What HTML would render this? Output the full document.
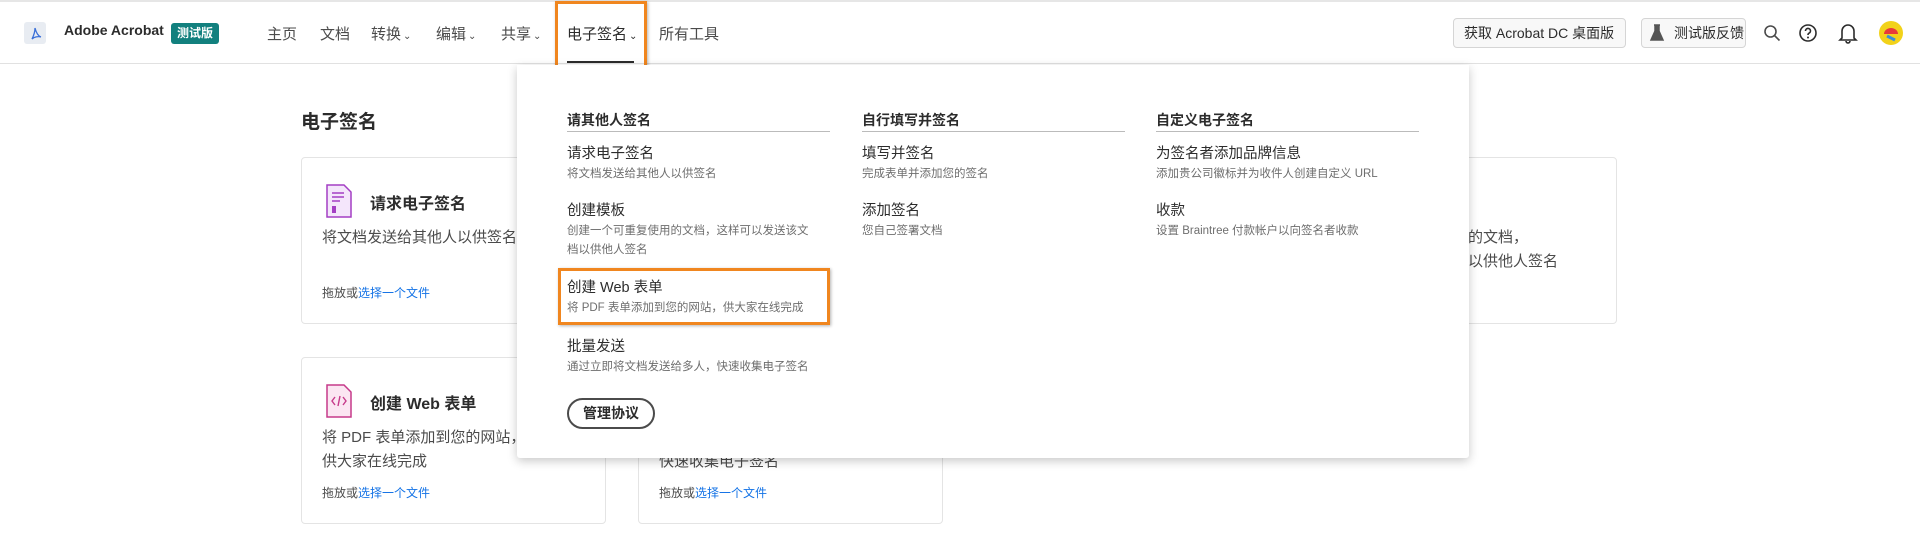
<!DOCTYPE html>
<html><head><meta charset="utf-8"><style>
*{margin:0;padding:0;box-sizing:border-box}
body{width:1920px;height:547px;background:#fff;font-family:"Liberation Sans","Noto Sans CJK SC",sans-serif;color:#2c2c2c;position:relative;overflow:hidden}
.a{position:absolute;white-space:nowrap}
.hdr{position:absolute;left:0;top:0;width:1920px;height:64px;border-top:2px solid #e6e6e6;border-bottom:1px solid #e1e1e1}
.nav{font-size:15px;color:#4b4b4b;top:23px}
.nav small{font-size:10px;margin-left:2px}
.btn{position:absolute;top:18px;height:30px;border:1px solid #d5d5d5;border-radius:4px;background:#f8f8f8;font-size:14px;color:#2c2c2c;line-height:28px;padding:0 10px;white-space:nowrap;overflow:hidden}
.card{position:absolute;width:305px;height:167px;border:1px solid #e4e4e4;border-radius:4px;background:#fff}
.ct{position:absolute;left:68px;top:32px;font-size:16px;font-weight:bold;color:#2c2c2c}
.cd{position:absolute;left:20px;top:68px;font-size:15px;color:#4b4b4b;line-height:24px}
.cl{position:absolute;left:20px;top:126px;font-size:12px;color:#4b4b4b}
.cl span{color:#1473e6}
.dd{position:absolute;left:517px;top:65px;width:952px;height:393px;background:#fff;box-shadow:0 3px 10px rgba(0,0,0,.22);border-radius:0 0 3px 3px}
.col{position:absolute;top:45px;width:263px}
.h{font-size:14px;font-weight:bold;color:#2c2c2c;border-bottom:1px solid #bbb;padding-bottom:3px;height:22px}
.it{position:absolute;left:0}
.t{font-size:14.5px;color:#2c2c2c;line-height:18px}
.d{font-size:11.5px;color:#6e6e6e;line-height:19px;margin-top:2px}
</style></head><body>
<div class="hdr"></div>
<svg class="a" style="left:24px;top:22px" width="22" height="22" viewBox="0 0 22 22"><rect width="22" height="22" rx="3" fill="#e8ecf2"/><path d="M8 17c2-4 3-8 3-11 1 4 3 8 6 9-3-1-7 0-9 2z" fill="none" stroke="#3a6fd8" stroke-width="1.3"/></svg>
<div class="a" style="left:64px;top:22px;font-size:14px;font-weight:bold;color:#2c2c2c">Adobe Acrobat</div>
<div class="a" style="left:171px;top:23px;width:48px;height:21px;background:#12807e;border-radius:3px;color:#fff;font-size:12px;font-weight:bold;text-align:center;line-height:21px">测试版</div>
<div class="a nav" style="left:267px">主页</div>
<div class="a nav" style="left:320px">文档</div>
<div class="a nav" style="left:371px">转换<small>⌄</small></div>
<div class="a nav" style="left:436px">编辑<small>⌄</small></div>
<div class="a nav" style="left:501px">共享<small>⌄</small></div>
<div class="a nav" style="left:567px;color:#2c2c2c">电子签名<small>⌄</small></div>
<div class="a nav" style="left:659px">所有工具</div>
<div class="a" style="left:567px;top:61px;width:67px;height:2px;background:#2c2c2c"></div>
<div class="a" style="left:555px;top:1px;width:92px;height:96px;border:3px solid #f0861f;box-shadow:1px 1px 3px rgba(0,0,0,.3)"></div>
<div class="btn" style="left:1453px;width:173px">获取 Acrobat DC 桌面版</div>
<div class="btn" style="left:1641px;width:105px;padding-left:32px">测试版反馈</div>
<svg class="a" style="left:1649px;top:24px" width="16" height="18" viewBox="0 0 16 18"><path d="M5 1h6M6 1v6L2 16h12L10 7V1" fill="#555" stroke="#555" stroke-width="1.5"/></svg>
<svg class="a" style="left:1763px;top:24px" width="18" height="18" viewBox="0 0 18 18"><circle cx="7.5" cy="7.5" r="5.5" fill="none" stroke="#4b4b4b" stroke-width="1.6"/><path d="M11.5 11.5l5 5" stroke="#4b4b4b" stroke-width="1.6"/></svg>
<svg class="a" style="left:1798px;top:23px" width="20" height="20" viewBox="0 0 20 20"><circle cx="10" cy="10" r="8" fill="none" stroke="#2c2c2c" stroke-width="1.6"/><path d="M7.5 8a2.5 2.5 0 1 1 3.5 2.2c-.8.4-1 .9-1 1.8" fill="none" stroke="#2c2c2c" stroke-width="1.6"/><circle cx="10" cy="14.5" r="1" fill="#2c2c2c"/></svg>
<svg class="a" style="left:1838px;top:22px" width="20" height="22" viewBox="0 0 20 22"><path d="M4 16V9a6 6 0 0 1 12 0v7l2 2H2z" fill="none" stroke="#2c2c2c" stroke-width="1.6"/><path d="M8 19a2 2 0 0 0 4 0" fill="none" stroke="#2c2c2c" stroke-width="1.6"/></svg>
<svg class="a" style="left:1879px;top:21px" width="24" height="24" viewBox="0 0 24 24"><circle cx="12" cy="12" r="12" fill="#f2d21a"/><path d="M5 13a7 6 0 0 1 14 0z" fill="#e83a3a"/><path d="M8 15l8 4" stroke="#3a8fd8" stroke-width="3"/></svg>

<div class="a" style="left:301px;top:107px;font-size:19px;font-weight:bold;color:#2c2c2c">电子签名</div>
<div class="card" style="left:301px;top:157px"><svg class="a" style="left:24px;top:26px" width="26" height="34" viewBox="0 0 26 34"><path d="M1 1h17l7 7v25H1z" fill="#f4e6fb" stroke="#a43fc4" stroke-width="1.5"/><path d="M6 9h12M6 13h12M6 17h8" stroke="#a43fc4" stroke-width="1.4"/><rect x="6" y="22" width="4" height="7" fill="#a43fc4"/></svg><div class="ct">请求电子签名</div><div class="cd">将文档发送给其他人以供签名</div><div class="cl">拖放或<span>选择一个文件</span></div></div>
<div class="card" style="left:638px;top:157px"></div>
<div class="card" style="left:975px;top:157px"></div>
<div class="card" style="left:1312px;top:157px"><div class="cd" style="left:20px">创建一个可重复使用的文档，<br>这样可以发送该文档以供他人签名</div></div>
<div class="card" style="left:301px;top:357px"><svg class="a" style="left:24px;top:26px" width="26" height="34" viewBox="0 0 26 34"><path d="M1 1h17l7 7v25H1z" fill="#fbe6f2" stroke="#c63a8a" stroke-width="1.5"/><path d="M9 13l-3 4 3 4M17 13l3 4-3 4M14 12l-2 10" fill="none" stroke="#c63a8a" stroke-width="1.4"/></svg><div class="ct">创建 Web 表单</div><div class="cd">将 PDF 表单添加到您的网站，<br>供大家在线完成</div><div class="cl">拖放或<span>选择一个文件</span></div></div>
<div class="card" style="left:638px;top:357px"><div class="cd" style="top:68px">通过立即将文档发送给多人，<br>快速收集电子签名</div><div class="cl">拖放或<span>选择一个文件</span></div></div>

<div class="dd">
<div class="col" style="left:50px"><div class="h">请其他人签名</div>
<div class="it" style="top:35px"><div class="t">请求电子签名</div><div class="d">将文档发送给其他人以供签名</div></div>
<div class="it" style="top:92px"><div class="t">创建模板</div><div class="d">创建一个可重复使用的文档，这样可以发送该文<br>档以供他人签名</div></div>
<div class="it" style="top:169px"><div class="t">创建 Web 表单</div><div class="d">将 PDF 表单添加到您的网站，供大家在线完成</div></div>
<div class="it" style="top:228px"><div class="t">批量发送</div><div class="d">通过立即将文档发送给多人，快速收集电子签名</div></div>
<div class="it" style="top:288px;width:88px;height:31px;border:2px solid #4b4b4b;border-radius:16px;font-size:14px;font-weight:bold;text-align:center;line-height:27px">管理协议</div>
</div>
<div class="col" style="left:345px"><div class="h">自行填写并签名</div>
<div class="it" style="top:35px"><div class="t">填写并签名</div><div class="d">完成表单并添加您的签名</div></div>
<div class="it" style="top:92px"><div class="t">添加签名</div><div class="d">您自己签署文档</div></div>
</div>
<div class="col" style="left:639px"><div class="h">自定义电子签名</div>
<div class="it" style="top:35px"><div class="t">为签名者添加品牌信息</div><div class="d">添加贵公司徽标并为收件人创建自定义 URL</div></div>
<div class="it" style="top:92px"><div class="t">收款</div><div class="d">设置 Braintree 付款帐户以向签名者收款</div></div>
</div>
</div>
<div class="a" style="left:558px;top:268px;width:272px;height:57px;border:3px solid #f0861f;box-shadow:1px 1px 3px rgba(0,0,0,.3)"></div>
</body></html>
